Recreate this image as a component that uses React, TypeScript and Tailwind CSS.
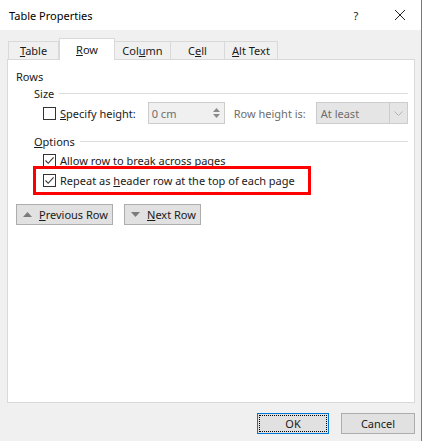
import React from "react";

function Check({ checked }: { checked: boolean }) {
  return (
    <span className="flex items-center justify-center w-[13px] h-[13px] border border-[#333333] bg-white shrink-0">
      {checked && (
        <svg width="11" height="11" viewBox="0 0 11 11" fill="none">
          <path d="M1.5 5.5L4.2 8.3L9.6 2.4" stroke="#333333" strokeWidth="1.1" />
        </svg>
      )}
    </span>
  );
}

function GroupLabel({ children }: { children: React.ReactNode }) {
  return (
    <div className="flex items-center gap-[5px] h-[16px]">
      <span>{children}</span>
      <div className="flex-1 h-px bg-[#dcdcdc]" />
    </div>
  );
}

function Tab({ label, active }: { label: React.ReactNode; active?: boolean }) {
  return active ? (
    <div className="relative z-10 flex items-center justify-center h-[22px] border border-b-0 border-[#d9d9d9] bg-white -mb-px w-[56px]">
      {label}
    </div>
  ) : (
    <div className="flex items-center justify-center h-[18px] border border-b-0 border-[#d9d9d9] bg-[#f0f0f0]">
      {label}
    </div>
  );
}

export default function App() {
  return (
    <div className="w-[424px] h-[441px] bg-white overflow-hidden text-[11px] text-[#1a1a1a] font-['Noto_Sans',sans-serif] leading-none whitespace-nowrap">
      <div className="w-[422px] h-[441px] bg-[#f0f0f0] border-r border-[#7a7a7a] flex flex-col">
        {/*title bar*/}
        <div className="h-[30px] bg-white flex items-center pl-[9px] shrink-0">
          <span className="text-black">Table Properties</span>
          <span className="ml-auto w-[12px] text-center">?</span>
          <svg width="12" height="12" viewBox="0 0 12 12" className="ml-[32px] mr-[15px]" fill="none">
            <path d="M1 1L11 11M11 1L1 11" stroke="#222" strokeWidth="1" />
          </svg>
        </div>

        {/*tabs*/}
        <div className="flex items-end pl-[8px] mt-[7px] h-[22px]">
          <div className="w-[51px]">
            <Tab label={<span><u>T</u>able</span>} />
          </div>
          <Tab active label={<span><u>R</u>ow</span>} />
          <div className="w-[57px] -ml-px">
            <Tab label={<span>Col<u>u</u>mn</span>} />
          </div>
          <div className="w-[55px] -ml-px">
            <Tab label={<span>C<u>e</u>ll</span>} />
          </div>
          <div className="w-[54px] -ml-px">
            <Tab label={<span><u>A</u>lt Text</span>} />
          </div>
        </div>

        {/*panel*/}
        <div className="ml-[7px] w-[408px] h-[344px] bg-white border border-[#d9d9d9] pl-[8px] pr-[6px] pt-[9px]">
          <div className="h-[14px] flex items-center">Rows</div>
          <div className="ml-[18px] mt-[2px]">
            <GroupLabel>Size</GroupLabel>
            <div className="flex items-center mt-[1px] ml-[9px] h-[22px]">
              <Check checked={false} />
              <span className="ml-[4px]"><u>S</u>pecify height:</span>
              <div className="ml-[12px] w-[77px] h-[22px] border border-[#cccccc] bg-[#f0f0f0] flex items-center">
                <span className="pl-[3px] text-[#6d6d6d]">0 cm</span>
                <div className="ml-auto w-[15px] h-full flex flex-col items-center justify-center gap-[2px]">
                  <svg width="7" height="4" viewBox="0 0 7 4"><path d="M0 4L3.5 0L7 4Z" fill="#8a8a8a" /></svg>
                  <svg width="7" height="4" viewBox="0 0 7 4"><path d="M0 0L3.5 4L7 0Z" fill="#8a8a8a" /></svg>
                </div>
              </div>
              <span className="ml-[9px] text-[#6d6d6d]">Row height is:</span>
              <div className="ml-[10px] w-[92px] h-[22px] border border-[#cccccc] bg-[#e5e5e5] flex items-center">
                <span className="pl-[4px] text-[#6d6d6d]">At least</span>
                <div className="ml-auto w-[18px] h-full border-l border-[#cccccc] flex items-center justify-center">
                  <svg width="9" height="5" viewBox="0 0 9 5" fill="none"><path d="M0.5 0.5L4.5 4.5L8.5 0.5" stroke="#b5b5b5" /></svg>
                </div>
              </div>
            </div>

            <div className="mt-[9px]">
              <GroupLabel><u>O</u>ptions</GroupLabel>
            </div>
            <div className="flex items-center gap-[4px] mt-[4px] ml-[9px] h-[14px]">
              <Check checked />
              <span>Allow row to brea<u>k</u> across pages</span>
            </div>
            <div className="relative flex items-center gap-[4px] mt-[6px] ml-[9px] h-[14px]">
              <div className="absolute left-[-10px] top-[-7px] w-[278px] h-[29px] border-[3px] border-[#ff0000]" />
              <Check checked />
              <span>Repeat as <u>h</u>eader row at the top of each page</span>
            </div>
          </div>

          <div className="flex gap-[11px] mt-[17px]">
            <button className="flex items-center h-[21px] w-[97px] bg-[#e1e1e1] border border-[#adadad] pl-[6px] gap-[7px]">
              <svg width="9" height="5" viewBox="0 0 9 5"><path d="M0 5L4.5 0L9 5Z" fill="#7a7a7a" /></svg>
              <span><u>P</u>revious Row</span>
            </button>
            <button className="flex items-center h-[21px] w-[77px] bg-[#e1e1e1] border border-[#adadad] pl-[6px] gap-[7px]">
              <svg width="9" height="5" viewBox="0 0 9 5"><path d="M0 0L4.5 5L9 0Z" fill="#7a7a7a" /></svg>
              <span><u>N</u>ext Row</span>
            </button>
          </div>
        </div>

        {/*footer*/}
        <div className="flex justify-end gap-[12px] pr-[6px] mt-[10px]">
          <button className="w-[72px] h-[21px] bg-[#e1e1e1] border border-[#0078d7] p-px">
            <span className="flex items-center justify-center w-full h-full border border-dotted border-black">OK</span>
          </button>
          <button className="w-[74px] h-[21px] bg-[#e1e1e1] border border-[#adadad] flex items-center justify-center">
            Cancel
          </button>
        </div>
      </div>
    </div>
  );
}
